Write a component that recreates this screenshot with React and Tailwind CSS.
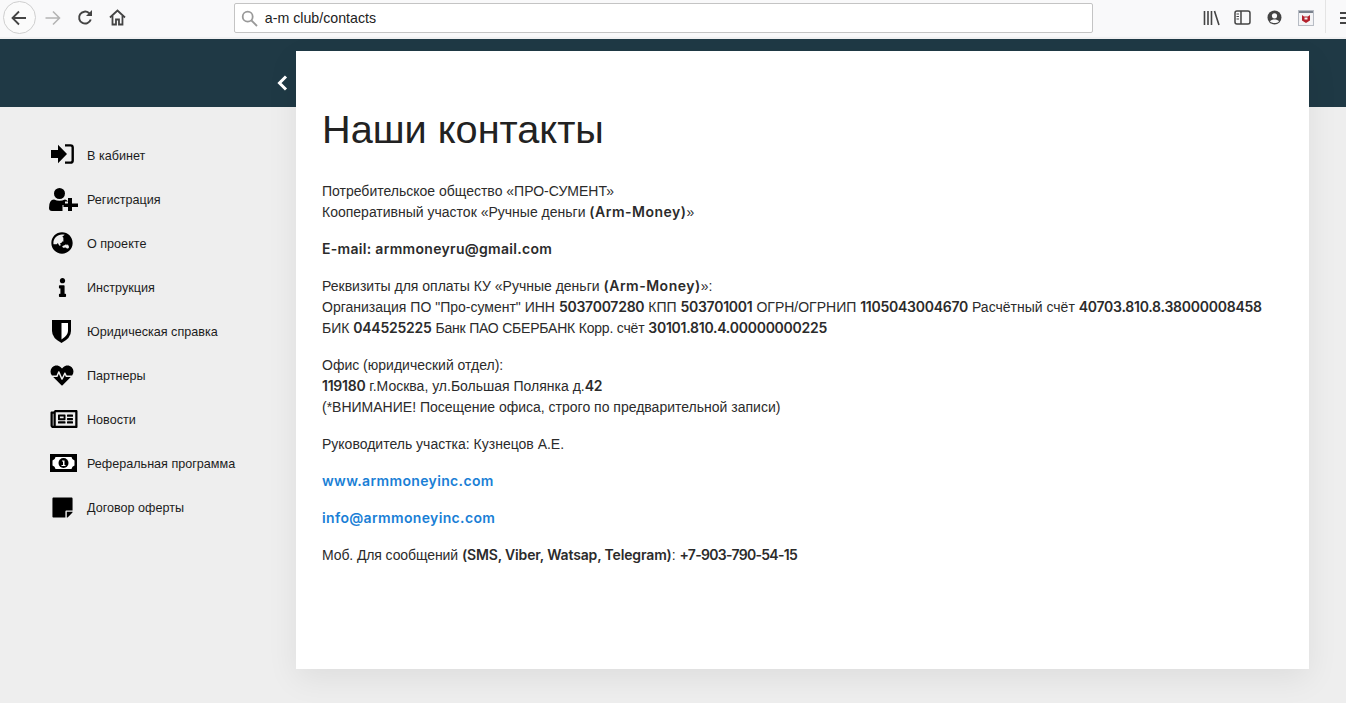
import React from "react";
import { FaGlobeAsia, FaInfo, FaHeartbeat, FaRegNewspaper, FaStickyNote } from "react-icons/fa";

const SignIn = ({ className }) => (
  <svg className={className} viewBox="0 0 23 20" fill="black">
    <path d="M0 6H7V0.8L16 10L7 19.2V14H0Z" />
    <path d="M14 1.4H19.5Q21.7 1.4 21.7 3.6V16.4Q21.7 18.6 19.5 18.6H14" fill="none" stroke="black" strokeWidth="2.4" />
  </svg>
);
const UserPlus = ({ className }) => (
  <svg className={className} viewBox="0 0 29 23" fill="black">
    <ellipse cx="10.5" cy="5.5" rx="5.5" ry="5.5" />
    <path d="M0 20Q0 11.5 5 11.5Q10.5 14 16 11.5Q18 12 19 13.5H16V17H13.5V23H3Q0 23 0 20Z" />
    <path d="M19 10H23V15.5H29V19H23V23H19V19H14.5V15.5H19Z" />
  </svg>
);
const Shield = ({ className }) => (
  <svg className={className} viewBox="0 0 19 23">
    <path d="M0 0H19V11Q19 18 9.5 23Q0 18 0 11Z" fill="black" />
    <path d="M9.5 3H16V11Q16 15.5 9.5 19.5Z" fill="white" />
  </svg>
);
const Money = ({ className }) => (
  <svg className={className} viewBox="0 0 27 18">
    <rect x="0" y="0" width="27" height="18" fill="black" />
    <path d="M5.5 3H21.5Q22 6 24.5 6.5V11.5Q22 12 21.5 15H5.5Q5 12 2.5 11.5V6.5Q5 6 5.5 3Z" fill="white" />
    <circle cx="13.5" cy="9" r="5" fill="black" />
    <path d="M12 6.5H14.5V11H15.5V12H11.5V11H13V7.5H12Z" fill="white" />
  </svg>
);

const items = [
  [SignIn, "В кабинет", "w-[23px] h-[20px] ml-[2px] -mt-[2px]"],
  [UserPlus, "Регистрация", "w-[29px] h-[23px]"],
  [FaGlobeAsia, "О проекте", "w-[22px] h-[22px] ml-[2px]"],
  [FaInfo, "Инструкция", "w-[23px] h-[19px] ml-[2px]"],
  [Shield, "Юридическая справка", "w-[19px] h-[23px] ml-[3px]"],
  [FaHeartbeat, "Партнеры", "w-[26px] h-[23px]"],
  [FaRegNewspaper, "Новости", "w-[28px] h-[24px] ml-[1px]"],
  [Money, "Реферальная программа", "w-[27px] h-[18px] ml-[1px]"],
  [FaStickyNote, "Договор оферты", "w-[23px] h-[23px] ml-[2px]"],
];

const base = "font-['Inter',sans-serif] font-semibold leading-none text-[#2b2b2b]";
const W = ({ children }) => <span className={base + " tracking-[0.5px]"}>{children}</span>;
const N = ({ children }) => <span className={base + " tracking-[-0.25px]"}>{children}</span>;
const E = ({ children }) => <span className={base + " tracking-[0.3px]"}>{children}</span>;
const T = ({ children }) => <span className={base + " tracking-[-0.15px]"}>{children}</span>;
const P = ({ children }) => <span className={base + " tracking-[-0.7px]"}>{children}</span>;
const A = ({ children }) => <a href="#" className="font-['Inter',sans-serif] font-semibold leading-none tracking-[0.35px] text-[#1a7fd6]">{children}</a>;

function Toolbar() {
  return (
    <div className="h-[39px] bg-[#f9f9fa] flex items-start relative border-b-2 border-[#f1f1f2]">
      <div className="w-[33px] h-[33px] ml-[3px] mt-[1px] rounded-full border border-[#cfcfcf] bg-[#fbfbfb] flex items-center justify-center">
        <svg width="18" height="18" viewBox="0 0 18 18" fill="none" stroke="#444" strokeWidth="1.8"><path d="M16 9H2.5M9 2.5L2.5 9L9 15.5" /></svg>
      </div>
      <svg className="ml-[8px] mt-[9px]" width="18" height="18" viewBox="0 0 18 18" fill="none" stroke="#b4b4b4" strokeWidth="1.6"><path d="M1.5 9H15.5M9 2.5L15.5 9L9 15.5" /></svg>
      <svg className="ml-[15px] mt-[9px]" width="17" height="17" viewBox="0 0 17 17" fill="none" stroke="#444" strokeWidth="2"><path d="M13.8 10.5A6 6 0 1 1 12 4L14 5.5" /><path d="M15 1V7H9Z" fill="#444" stroke="none" /></svg>
      <svg className="ml-[15px] mt-[9px]" width="17" height="17" viewBox="0 0 17 17" fill="none" stroke="#444" strokeWidth="1.8"><path d="M1 8.5L8.5 1.5L16 8.5" /><path d="M3.5 7V15.5H7V10.5H10V15.5H13.5V7" /></svg>
      <div className="ml-[108px] mt-[3px] w-[861px] h-[30px] bg-white border border-[#c4c4c4] rounded-[2px] flex items-center">
        <svg className="ml-[6px]" width="17" height="17" viewBox="0 0 17 17" fill="none" stroke="#999" strokeWidth="1.8"><circle cx="6.7" cy="6.7" r="5" /><path d="M10.5 10.5L16 16" /></svg>
        <span className="ml-[7px] mt-[1px] text-[14.2px] text-[#222] font-['Liberation_Sans',sans-serif]">a-m club/contacts</span>
      </div>
      <svg className="ml-[110px] mt-[10px]" width="17" height="16" viewBox="0 0 17 16" fill="none" stroke="#444" strokeWidth="1.6"><path d="M1.5 1V15M5 1V15M8.5 1V15M11.5 1L16 15" /></svg>
      <svg className="ml-[14px] mt-[10px]" width="17" height="15" viewBox="0 0 17 15" fill="none" stroke="#444" strokeWidth="1.5"><rect x="1" y="1" width="15" height="13" rx="2" /><path d="M7 1V14" /><path d="M2.5 4H5M2.5 6.5H5M2.5 9H5" strokeWidth="1" /></svg>
      <svg className="ml-[16px] mt-[10px]" width="15" height="15" viewBox="0 0 15 15"><circle cx="7.5" cy="7.5" r="7" fill="#444" /><circle cx="7.5" cy="5.8" r="2.6" fill="#f9f9fa" /><path d="M3 11.5C4.5 9 10.5 9 12 11.5C10 13.5 5 13.5 3 11.5Z" fill="#f9f9fa" /></svg>
      <svg className="ml-[16px] mt-[10px]" width="16" height="16" viewBox="0 0 16 16"><rect x="0.5" y="0.5" width="15" height="15" fill="#f4f4f6" stroke="#b7bcc4" /><rect x="1" y="1" width="14" height="2" fill="#79808c" /><path d="M4 5L6 6.5H10L12 5V10.5L8 13L4 10.5Z" fill="#b3202c" /><rect x="6.5" y="7.5" width="3" height="2" fill="#f4f4f6" /></svg>
      <div className="ml-[11px] mt-0 w-px h-[33px] bg-[#e4e4e4]" />
      <svg className="ml-[14px] mt-[12px]" width="6" height="12" viewBox="0 0 6 12" fill="#444"><path d="M0 0H6V2H0ZM0 5H6V7H0ZM0 10H6V12H0Z" /></svg>
    </div>
  );
}

export default function App() {
  return (
    <div className="h-[703px] overflow-hidden bg-[#eeeeee] font-['Liberation_Sans',sans-serif] text-[#222]">
      <Toolbar />
      <div className="h-[68px] bg-[#1f3945]" />
      <div className="flex items-start">
        <aside className="w-[296px] shrink-0 pt-[26px] pl-[49px]">
          {items.map(([Icon, label, size]) => (
            <div key={label} className="h-[44px] flex items-center">
              <div className="w-[38px] flex items-center">
                <Icon className={size + " text-black"} />
              </div>
              <span className="mt-[2px] text-[12.6px] text-[#1c1c1c]">{label}</span>
            </div>
          ))}
        </aside>
        <main className="relative -mt-[56px] w-[1013px] h-[618px] bg-white shadow-[0_10px_30px_rgba(0,0,0,0.07)] pl-[26px] pt-[54px]">
          <button className="absolute -left-[19px] top-[24px] text-white" aria-label="Свернуть">
            <svg width="11" height="16" viewBox="0 0 11 16" fill="none" stroke="#fff" strokeWidth="3"><path d="M9 1.5L2.5 8L9 14.5" /></svg>
          </button>
          <h1 className="text-[39.7px] leading-[48px] text-[#222] mb-[28px]">Наши контакты</h1>
          <div className="text-[14px] leading-[21px] text-[#2b2b2b] flex flex-col gap-[16px]">
            <p>Потребительское общество «ПРО-СУМЕНТ»<br />Кооперативный участок «Ручные деньги <W>(Arm-Money)</W>»</p>
            <p><E>E-mail: armmoneyru@gmail.com</E></p>
            <p>
              Реквизиты для оплаты КУ «Ручные деньги <W>(Arm-Money)</W>»:<br />
              Организация ПО "Про-сумент" ИНН <N>5037007280</N> КПП <N>503701001</N> ОГРН/ОГРНИП <N>1105043004670</N> Расчётный счёт <N>40703.810.8.38000008458</N><br />
              БИК <N>044525225</N> <span className="tracking-[-0.2px]">Банк ПАО СБЕРБАНК Корр. счёт</span> <N>30101.810.4.00000000225</N>
            </p>
            <p>
              Офис (юридический отдел):<br />
              <N>119180</N> г.Москва, ул.Большая Полянка д.<N>42</N><br />
              (*ВНИМАНИЕ! Посещение офиса, строго по предварительной записи)
            </p>
            <p>Руководитель участка: Кузнецов А.Е.</p>
            <p><A>www.armmoneyinc.com</A></p>
            <p><A>info@armmoneyinc.com</A></p>
            <p><span className="tracking-[-0.1px]">Моб. Для сообщений</span> <T>(SMS, Viber, Watsap, Telegram)</T>: <P>+7-903-790-54-15</P></p>
          </div>
        </main>
      </div>
    </div>
  );
}
